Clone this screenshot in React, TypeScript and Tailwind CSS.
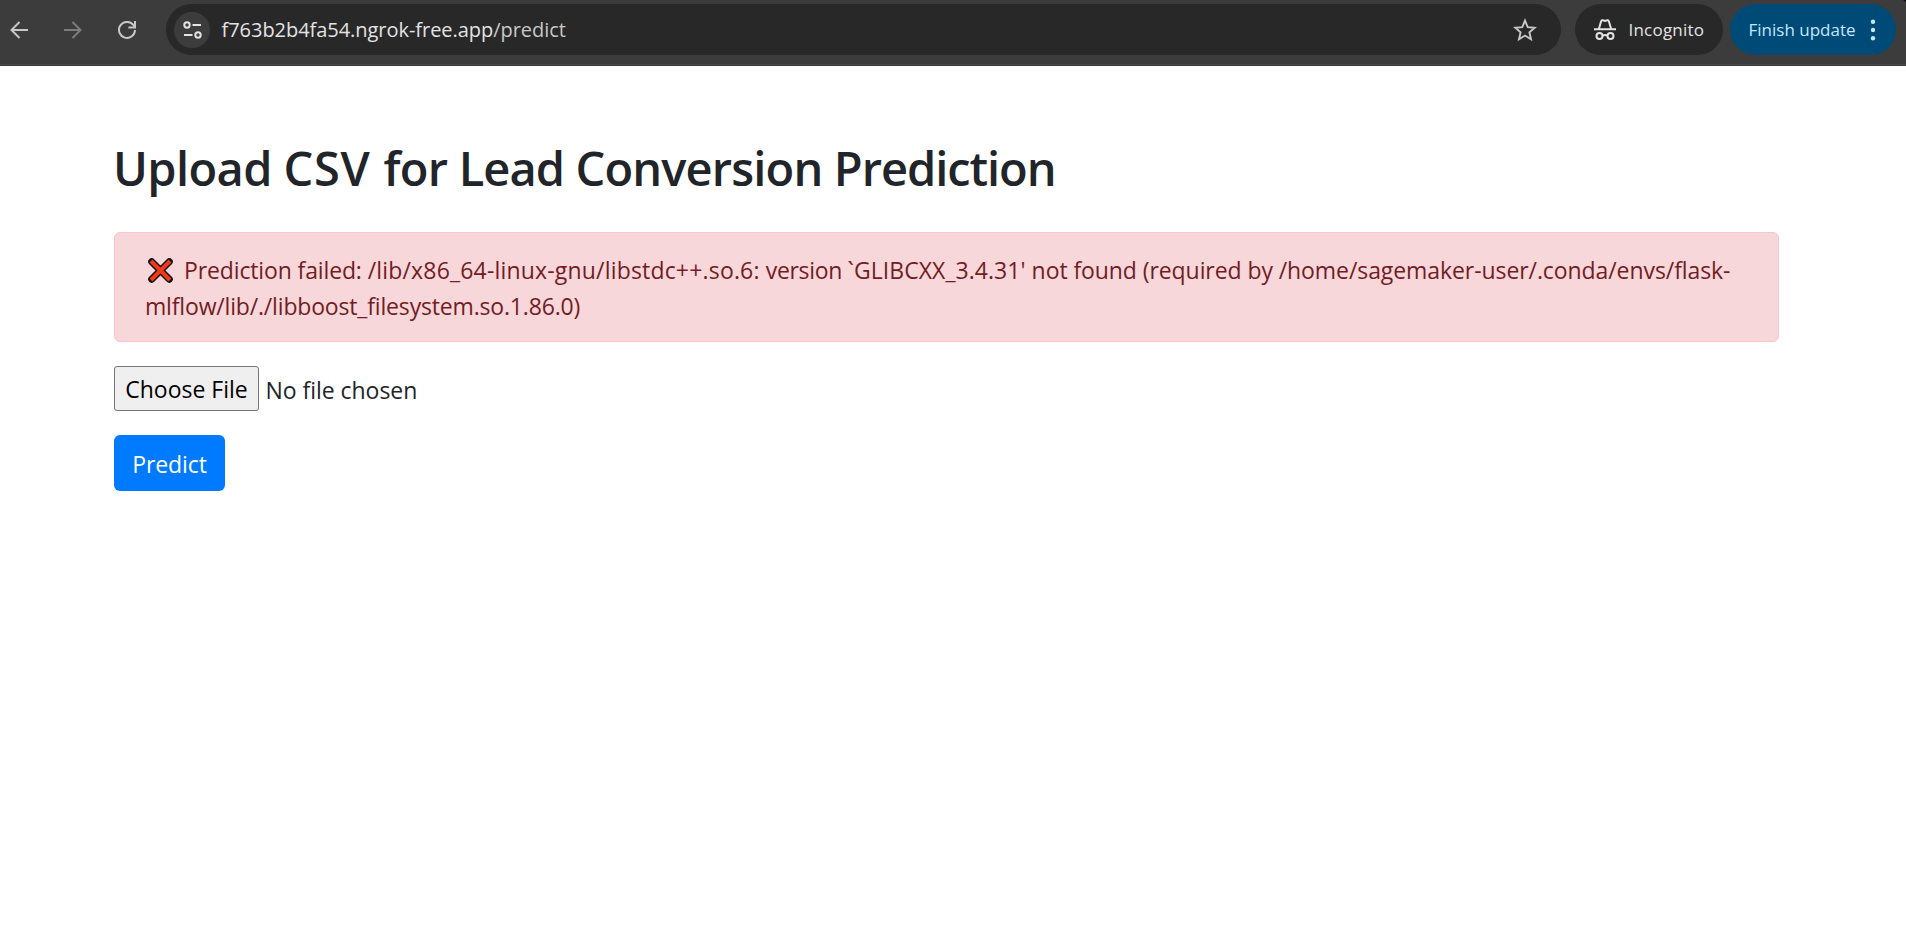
import React from "react";

function Toolbar() {
  return (
    <header className="bg-black">
      <div className="flex h-[66px] items-start rounded-tr-[4px] border-b border-[#383838] bg-[#3c3c3c] pt-1 shadow-[inset_0_-1px_0_#474747]">
        <div className="flex h-[51px] w-[166px] shrink-0 items-center">
          <svg className="ml-[10px] h-[18px] w-[18px]" viewBox="0 0 18 18" fill="none" stroke="#c7c7c7" strokeWidth="2">
            <path d="M18 9H2M9.5 1L1.5 9l8 8" />
          </svg>
          <svg className="ml-9 h-[18px] w-[18px]" viewBox="0 0 18 18" fill="none" stroke="#7c7c7c" strokeWidth="2">
            <path d="M0 9h16M8.5 1l8 8-8 8" />
          </svg>
          <svg className="ml-9 h-[18px] w-[18px]" viewBox="0 0 18 18" fill="none" stroke="#c7c7c7" strokeWidth="2">
            <path d="M17 9a8 8 0 1 1-2.3-5.7L17 5.6M17 0v6.6h-6.6" />
          </svg>
        </div>
        <div className="flex h-[51px] w-[1395px] shrink-0 items-center rounded-full bg-[#282828] pl-[7.5px] pr-6">
          <div className="flex h-9 w-9 shrink-0 items-center justify-center rounded-full bg-[#3c3c3c]">
            <svg className="ml-px h-[18px] w-[19px]" viewBox="0 0 19 18" fill="none" stroke="#e3e3e3" strokeWidth="2">
              <circle cx="4" cy="4" r="2.7" />
              <path d="M9.5 4H18M1 14h8.5" />
              <circle cx="15" cy="14" r="2.7" />
            </svg>
          </div>
          <div className="ml-3 flex-1 whitespace-pre font-['Open_Sans',sans-serif] text-[20px] leading-[30px] tracking-[-0.04px] text-[#e3e3e3]">
            f763b2b4fa54.ngrok-free.app<span className="text-[#c7c7c7]">/predict</span>
          </div>
          <svg className="h-6 w-6" viewBox="0 0 24 24" fill="none" stroke="#c7c7c7" strokeWidth="1.9">
            <path d="M12 2.6l2.7 6.5 7 .6-5.3 4.6 1.6 6.9-6-3.7-6 3.7 1.6-6.9-5.3-4.6 7-.6z" />
          </svg>
        </div>
        <div className="ml-[13.5px] flex h-[51px] w-[148px] shrink-0 items-center rounded-full bg-[#282828] pl-[19px]">
          <svg className="h-[22px] w-[22px]" viewBox="0 0 22 22" fill="none" stroke="#e3e3e3" strokeWidth="2">
            <path d="M0 10.2h22M5 9.5l2.2-7.4c.2-.8.8-1 1.5-.8l2.3.7 2.3-.7c.7-.2 1.3 0 1.5.8L17 9.5" />
            <circle cx="5.5" cy="17" r="3" />
            <circle cx="16.5" cy="17" r="3" />
            <path d="M8.5 16.6c1.6-.9 3.4-.9 5 0" />
          </svg>
          <span className="ml-[13px] whitespace-nowrap font-['Open_Sans',sans-serif] text-[17px] tracking-[0.22px] text-[#e3e3e3]">Incognito</span>
        </div>
        <div className="ml-[7.5px] flex h-[51px] w-[166px] shrink-0 items-center rounded-full bg-[#004a77] pl-[18.5px] text-[#c2e7ff]">
          <span className="w-[108px] whitespace-nowrap font-['Open_Sans',sans-serif] text-[17px]">Finish update</span>
          <svg className="ml-[13.5px] h-[22px] w-[6px]" viewBox="0 0 6 22" fill="currentColor">
            <circle cx="3" cy="2.8" r="2.2" />
            <circle cx="3" cy="11" r="2.2" />
            <circle cx="3" cy="19.2" r="2.2" />
          </svg>
        </div>
      </div>
    </header>
  );
}

export default function App() {
  return (
    <div className="flex h-[942px] flex-col overflow-hidden bg-white font-['Open_Sans',sans-serif] text-[23px] leading-9 text-[#212529]">
      <Toolbar />
      <main className="w-[1779px] pl-[114px] pt-[73px]">
        <h1 className="-ml-px whitespace-pre text-[47px] font-semibold leading-[58px] tracking-[-0.74px]">
          <span className="tracking-[-0.6px]">Upload </span>
          <span className="tracking-[0.7px]">CSV </span>
          <span>for </span>
          <span className="tracking-[-0.9px]">Lead </span>
          <span className="tracking-[-0.84px]">Conversion </span>
          <span className="tracking-[-1.05px]">Prediction</span>
        </h1>
        <div className="mt-[35px] h-[110px] whitespace-nowrap rounded-[6px] border border-[#f5c6cb] bg-[#f8d7da] px-[30px] pb-[17px] pt-[19px] text-[#721c24]">
          <div className="flex">
            <svg className="ml-[3px] mr-[11px] mt-[6px] h-[25px] w-[25px] shrink-0" viewBox="0 0 25 25">
              <path d="M3.7 3.7l17.6 17.6M21.3 3.7L3.7 21.3" stroke="#111" strokeWidth="7" strokeLinecap="round" />
              <path d="M3 3l19 19M22 3L3 22" stroke="#f03a17" strokeWidth="4" />
            </svg>
            <span className="whitespace-pre">
              <span className="tracking-[-0.13px]">Prediction failed: </span>
              <span className="tracking-[0.18px]">/lib/x86_64-linux-gnu/libstdc++.so.6: </span>
              <span className="tracking-[-0.35px]">version </span>
              <span className="tracking-[0.05px]">`GLIBCXX_3.4.31' </span>
              <span className="tracking-[-0.08px]">not found (required by /home/sagemaker-user/.conda/envs/flask-</span>
            </span>
          </div>
          <div className="tracking-[-0.17px]">mlflow/lib/./libboost_filesystem.so.1.86.0)</div>
        </div>
        <div className="mt-6 flex h-[45px] items-center">
          <button className="h-[45px] w-[145px] whitespace-nowrap rounded-[3px] border border-[#767676] bg-[#efefef] text-black">Choose File</button>
          <span className="ml-[6.5px] mt-[2px] tracking-[-0.04px]">No file chosen</span>
        </div>
        <button className="mt-6 block h-14 w-[111px] rounded-[6px] bg-[#007bff] pt-[2px] tracking-[-0.1px] text-white">Predict</button>
      </main>
    </div>
  );
}
